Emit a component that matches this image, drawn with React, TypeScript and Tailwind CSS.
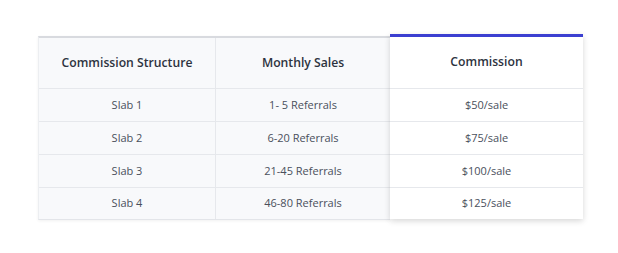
const rows = [
  { slab: 'Slab 1', sales: '1- 5 Referrals', commission: '$50/sale' },
  { slab: 'Slab 2', sales: '6-20 Referrals', commission: '$75/sale' },
  { slab: 'Slab 3', sales: '21-45 Referrals', commission: '$100/sale' },
  { slab: 'Slab 4', sales: '46-80 Referrals', commission: '$125/sale' },
]

function Column({
  title,
  cells,
  last,
  headH,
}: {
  title: string
  cells: string[]
  last?: boolean
  headH: string
}) {
  return (
    <div className={`flex flex-col ${last ? '' : 'border-r border-[#e6e8ec]'}`}>
      <div className={`${headH} flex items-center justify-center text-[12.2px] font-semibold text-[#2d3340]`}>
        {title}
      </div>
      {cells.map((c, i) => (
        <div
          key={c}
          className={`${i === cells.length - 1 ? 'h-[32px]' : 'h-[33px]'} flex items-center justify-center border-t border-[#e6e8ec] text-[11px] text-[#4a505c]`}
        >
          {c}
        </div>
      ))}
    </div>
  )
}

export default function App() {
  return (
    <div
      className="w-[618px] h-[253px] bg-white pt-[36px] pl-[38px]"
      style={{ fontFamily: '"Open Sans", "Noto Sans", sans-serif' }}
    >
      <div className="flex items-start">
        <div className="grid grid-cols-[177px_174px] bg-[#f8f9fb] border-t-2 border-[#d8dadf] border-l border-b border-l-[#eceef1] border-b-[#e3e5e9] shadow-[0_1px_3px_rgba(0,0,0,0.06)]">
          <Column title="Commission Structure" cells={rows.map((r) => r.slab)} headH="h-[50px]" />
          <Column title="Monthly Sales" cells={rows.map((r) => r.sales)} headH="h-[50px]" last />
        </div>
        <div className="w-[193px] -mt-[2px] bg-white border-t-[3px] border-[#3b3fd0] shadow-[0_2px_6px_rgba(0,0,0,0.16)]">
          <Column title="Commission" cells={rows.map((r) => r.commission)} headH="h-[51px]" last />
        </div>
      </div>
    </div>
  )
}
